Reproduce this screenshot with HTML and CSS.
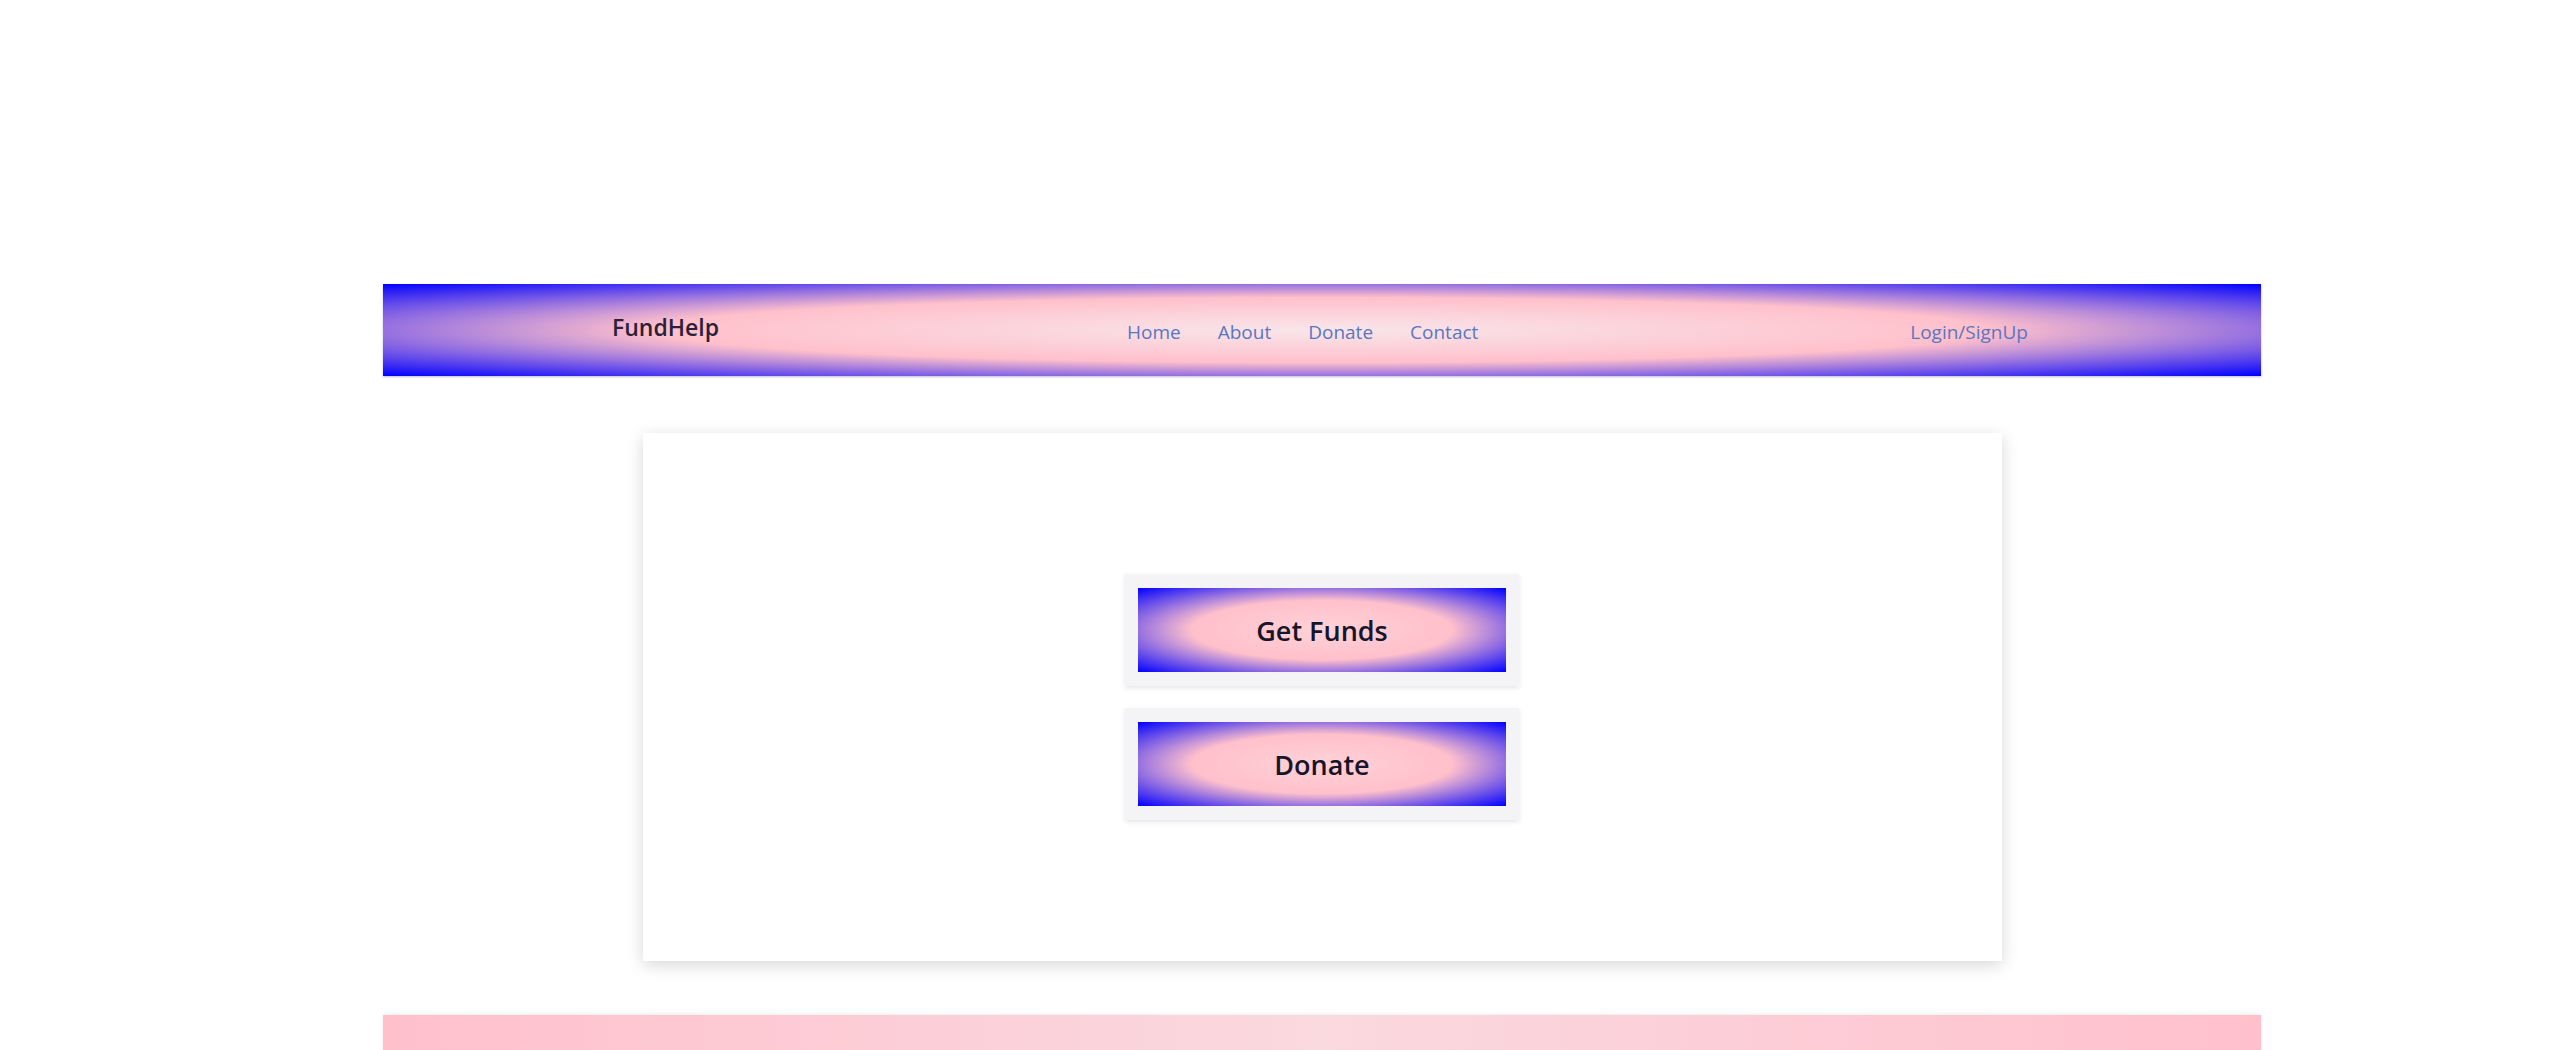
FILE: index.html
```html
<!DOCTYPE html>
<html lang="en">
<head>
<meta charset="utf-8">
<title>FundHelp</title>
<link rel="stylesheet" href="styles.css">
</head>
<body>
<div class="page">
  <header class="navbar">
    <div class="brand">FundHelp</div>
    <nav class="links">
      <a href="#">Home</a>
      <a href="#">About</a>
      <a href="#">Donate</a>
      <a href="#">Contact</a>
    </nav>
    <a class="login" href="#">Login/SignUp</a>
  </header>
  <main class="card">
    <div class="btn-wrap"><button class="btn">Get Funds</button></div>
    <div class="btn-wrap"><button class="btn">Donate</button></div>
  </main>
  <footer class="footer"></footer>
</div>
</body>
</html>
```
FILE: styles.css
```css
html, body {
  margin: 0;
  padding: 0;
  background: #ffffff;
  overflow: hidden;
  font-family: "Open Sans", "Noto Sans", sans-serif;
}
.page {
  width: 1878px;
  margin-left: 383px;
  padding-top: 284px;
  display: flex;
  flex-direction: column;
}
.navbar {
  height: 92px;
  box-sizing: border-box;
  padding: 0 233px 0 229px;
  display: flex;
  align-items: center;
  justify-content: space-between;
  background: radial-gradient(ellipse farthest-corner at center, #f8e6ea 0%, #ffc0cb 50%, #0000ff 100%);
  box-shadow: 0 1px 2px rgba(80, 60, 160, 0.35);
}
.brand {
  font-size: 23px;
  font-weight: 600;
  color: #2b1f3a;
  margin-top: -6px;
}
.links {
  display: flex;
  gap: 37px;
  margin-left: -24px;
  padding-top: 3px;
}
.links a, .login {
  font-size: 19px;
  color: #5a76c2;
  text-decoration: none;
}
.login {
  padding-top: 3px;
}
.card {
  align-self: center;
  width: 1359px;
  height: 528px;
  margin-top: 57px;
  background: #ffffff;
  box-shadow: 0 4px 16px rgba(0, 0, 0, 0.16);
  display: flex;
  flex-direction: column;
  align-items: center;
  justify-content: center;
  gap: 22px;
}
.btn-wrap {
  width: 394px;
  height: 112px;
  box-sizing: border-box;
  padding: 14px 13px;
  background: #f4f4f6;
  box-shadow: 0 2px 5px rgba(0, 0, 0, 0.1);
}
.btn {
  width: 100%;
  height: 100%;
  border: none;
  padding: 0;
  display: block;
  font-family: "Open Sans", "Noto Sans", sans-serif;
  font-size: 27px;
  font-weight: 600;
  color: #18152a;
  background: radial-gradient(ellipse farthest-corner at center, #ffd2d8 0%, #ffc0cb 50%, #0000ff 100%);
}
.footer {
  height: 100px;
  margin-top: 54px;
  background: linear-gradient(90deg, #ffc0cc 0%, #fad9df 50%, #ffc0cc 100%);
  box-shadow: 0 -1px 3px rgba(0, 0, 0, 0.08);
}
```
